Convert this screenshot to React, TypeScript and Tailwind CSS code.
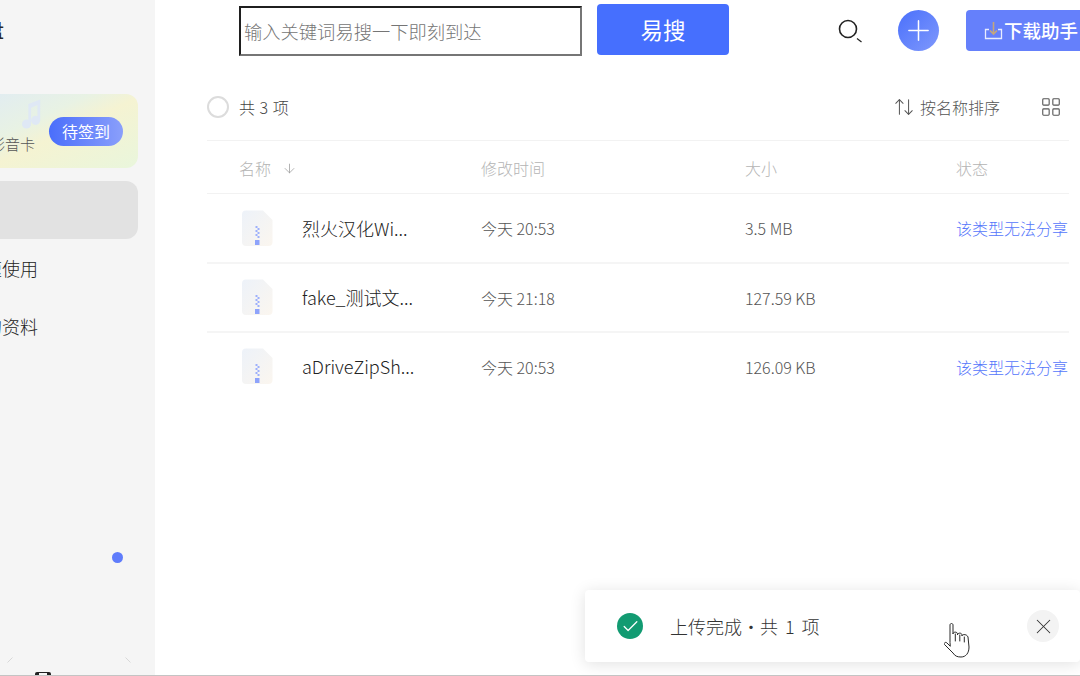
import React from 'react';
import { ArrowDown, ArrowUpDown, Plus, X, Check, LayoutGrid } from 'lucide-react';

const files = [
  { name: '烈火汉化Wi...', time: '今天 20:53', size: '3.5 MB', share: '该类型无法分享', h: 'h-[70px]' },
  { name: 'fake_测试文...', time: '今天 21:18', size: '127.59 KB', share: '', h: 'h-[69px]' },
  { name: 'aDriveZipSh...', time: '今天 20:53', size: '126.09 KB', share: '该类型无法分享', h: 'h-[67px]' },
];

const ZipIcon = () => (
  <svg width="32" height="37" viewBox="0 0 32 37" className="shrink-0">
    <defs>
      <linearGradient id="zipBg" x1="0" y1="0" x2="1" y2="1">
        <stop offset="0" stopColor="#edf2f9" />
        <stop offset="1" stopColor="#fbf6ef" />
      </linearGradient>
    </defs>
    <path d="M5 0.500H22L31.500 10V32a4 4 0 0 1-4 4H5a4 4 0 0 1-4-4V4.500a4 4 0 0 1 4-4z" fill="url(#zipBg)" />
    <path d="M14.500 16h2v2h-2zM16.500 18h2v2h-2zM14.500 20h2v2h-2zM16.500 22h2v2h-2zM14.500 24h2v2h-2zM16.500 26h2v2h-2z" fill="#9db0fb" />
    <rect x="14" y="30" width="4.500" height="5" fill="#8ea3fb" />
  </svg>
);

const HandCursor = () => (
  <svg width="27" height="36" viewBox="0 0 27 36" fill="#fff" stroke="#2a2a2a" strokeWidth="1" strokeLinejoin="round" strokeLinecap="round">
    <path d="M6 19V2c0-2 3-2 3 0v9c0-2.500 4.500-2.500 4.500 0v1c0-2.500 4.500-2.500 4.500 0v1c0-2 5-2 6 1l1 10c0 6-3 10-8 10-4 0-6-1-8-4L.5 21.500c-1-1.500 1-3 2.500-1.500L6 23z" />
    <path d="M11.300 11v7M15.800 12v6M20.300 14v5" fill="none" />
  </svg>
);

export default function App() {
  return (
    <div className="relative flex h-[676px] w-[1080px] overflow-hidden bg-white font-['Noto_Sans_CJK_SC','Noto_Sans',sans-serif] text-[#333]">
      {/* sidebar is cut off on the left in the capture */}
      <aside className="flex w-[155px] shrink-0 flex-col overflow-hidden bg-[#f5f5f5] pr-[17px]">
        <div className="-ml-[60px] mt-[16px] flex h-[28px] items-center">
          <span className="w-[64px] text-right text-[20px] leading-[28px] font-medium whitespace-nowrap text-[#26262c]">云盘</span>
        </div>
        <div className="relative -ml-[80px] mt-[50px] flex h-[74px] shrink-0 items-center justify-end rounded-[12px] bg-[linear-gradient(155deg,#dce8fb_0%,#e8f2e4_45%,#f5f3d2_60%,#e9f6dc_100%)] pr-[15px]">
          <svg width="20" height="32" viewBox="0 0 22 34" fill="#dfe8f5" className="absolute top-[4px] left-[102px]">
            <path d="M7 6l13-5v23h-3V7L10 10v18H7z" />
            <ellipse cx="5" cy="28" rx="5" ry="5" />
            <ellipse cx="15" cy="24" rx="5" ry="5" />
          </svg>
          <span className="absolute top-[39px] left-[70px] text-[15px] leading-[22px] font-light whitespace-nowrap text-[#555]">彩音卡</span>
          <button className="h-[29px] w-[74px] rounded-full bg-[linear-gradient(90deg,#4a6efb,#8a9ffb)] text-[16px] leading-[29px] text-white">待签到</button>
        </div>
        <div className="-ml-[80px] mt-[13px] h-[58px] shrink-0 rounded-[12px] bg-[#e2e2e2]" />
        <div className="-ml-[60px] mt-[17px] w-[98px] text-right text-[18px] leading-[24px] font-light whitespace-nowrap text-[#222]">快速使用</div>
        <div className="-ml-[60px] mt-[34px] w-[98px] text-right text-[18px] leading-[24px] font-light whitespace-nowrap text-[#222]">我的资料</div>
        <div className="mt-[214px] ml-[112px] h-[11px] w-[11px] shrink-0 rounded-full bg-[#5f7cfb]" />
        <div className="mt-[94px] flex justify-between px-[7px] text-[#d8d8d8]">
          <svg width="6" height="6" viewBox="0 0 6 6" fill="none" stroke="currentColor"><path d="M0.500 5.500L5.500 0.500" /></svg>
          <svg width="6" height="6" viewBox="0 0 6 6" fill="none" stroke="currentColor"><path d="M0.500 0.500L5.500 5.500" /></svg>
        </div>
      </aside>

      <main className="flex min-w-0 flex-1 flex-col">
        <header className="flex h-[59px] shrink-0 items-start pl-[84px]">
          <input
            placeholder="输入关键词易搜一下即刻到达"
            className="mt-[6px] h-[50px] w-[343px] shrink-0 border-2 border-t-[#1f1f1f] border-r-[#767676] border-b-[#767676] border-l-[#1f1f1f] bg-white px-[3px] text-[18.300px] font-light text-[#555] placeholder:text-[#757575]"
          />
          <button className="mt-[4px] ml-[15px] h-[51px] w-[132px] shrink-0 rounded-[4px] bg-[#466ffe] text-[22.500px] text-white">易搜</button>
          <svg width="28" height="28" viewBox="0 0 28 28" fill="none" stroke="#222" strokeWidth="1.600" className="mt-[17px] ml-[107px] shrink-0">
            <circle cx="12" cy="12" r="8.500" />
            <path d="M21 21.500l4.500 3.500" strokeWidth="1.200" />
          </svg>
          <div className="mt-[10px] ml-[34px] flex h-[41px] w-[41px] shrink-0 items-center justify-center rounded-full bg-[linear-gradient(135deg,#4a70fb,#7f98fc)]">
            <Plus size={33} strokeWidth={1.100} color="#fff" />
          </div>
          <div className="mt-[10px] ml-[27px] flex h-[41px] w-[130px] shrink-0 items-center rounded-[4px] bg-[#6580fb] pl-[18px] text-[18.500px] font-medium whitespace-nowrap text-white">
            <svg width="20" height="20" viewBox="0 0 20 20" fill="none" className="shrink-0">
              <path d="M5 8.500H1.500v9h16v-9H14" stroke="#e8ecff" strokeWidth="1.300" />
              <path d="M9.500 1v12M6 9.500l3.500 3.500L13 9.500" stroke="#c4a67c" strokeWidth="1.600" />
            </svg>
            下载助手
          </div>
        </header>

        <section className="ml-[52px] w-[862px]">
          <div className="flex h-[82px] items-center border-b border-[#f2f2f2] pt-[14px] pr-[7px]">
            <span className="h-[22px] w-[22px] rounded-full border-2 border-[#dcdcdc]" />
            <span className="ml-[10px] text-[16px] font-light [word-spacing:1px] text-[#444]">共 3 项</span>
            <ArrowUpDown size={22} strokeWidth={1.100} color="#555" className="ml-auto" />
            <span className="ml-[5px] text-[16px] font-light text-[#555]">按名称排序</span>
            <LayoutGrid size={22} strokeWidth={1.200} color="#555" className="ml-[40px]" />
          </div>

          <div className="flex h-[53px] items-center border-b border-[#f2f2f2] pt-[2px] text-[16px] font-light text-[#b4b4b4]">
            <div className="flex w-[274px] items-center pl-[32px]">
              名称
              <ArrowDown size={15} strokeWidth={1.200} color="#999" className="ml-[11px]" />
            </div>
            <div className="w-[264px]">修改时间</div>
            <div className="w-[211px]">大小</div>
            <div>状态</div>
          </div>

          {files.map((f) => (
            <div key={f.name} className={`flex ${f.h} items-center border-b-2 border-[#f5f5f5] last:border-b-0`}>
              <div className="flex w-[274px] items-center pl-[34px]">
                <ZipIcon />
                <span className="ml-[29px] text-[18px] font-light whitespace-nowrap text-[#222]">{f.name}</span>
              </div>
              <div className="w-[264px] text-[16px] font-light text-[#555]">{f.time}</div>
              <div className="w-[211px] text-[16px] font-light text-[#555]">{f.size}</div>
              <div className="text-[16px] font-light whitespace-nowrap text-[#5576fb]">{f.share}</div>
            </div>
          ))}
        </section>
      </main>

      {/* upload toast */}
      <div className="absolute top-[590px] left-[585px] flex h-[72px] w-[495px] items-center rounded-[4px] bg-white pr-[21px] pl-[32px] shadow-[0_2px_16px_rgba(0,0,0,0.12)]">
        <span className="flex h-[26px] w-[26px] items-center justify-center rounded-full bg-[#129b72]">
          <Check size={19} strokeWidth={1.600} color="#fff" />
        </span>
        <span className="ml-[27px] text-[18px] font-light [word-spacing:3px] text-[#333]">上传完成・共 1 项</span>
        <span className="ml-auto flex h-[32px] w-[32px] items-center justify-center rounded-full bg-[#f3f3f3]">
          <X size={25} strokeWidth={1.000} color="#333" />
        </span>
      </div>
      <div className="absolute top-[623px] left-[944px]">
        <HandCursor />
      </div>

      {/* bottom edge of the capture */}
      <svg width="20" height="6" viewBox="0 0 20 6" className="absolute top-[671px] left-[34px]">
        <rect x="1" y="1" width="16" height="8" rx="2" fill="#222" />
        <rect x="5" y="2" width="8" height="3" fill="#f5f5f5" />
      </svg>
      <div className="absolute inset-x-0 bottom-0 h-px bg-[#c4c4c4]" />
    </div>
  );
}
